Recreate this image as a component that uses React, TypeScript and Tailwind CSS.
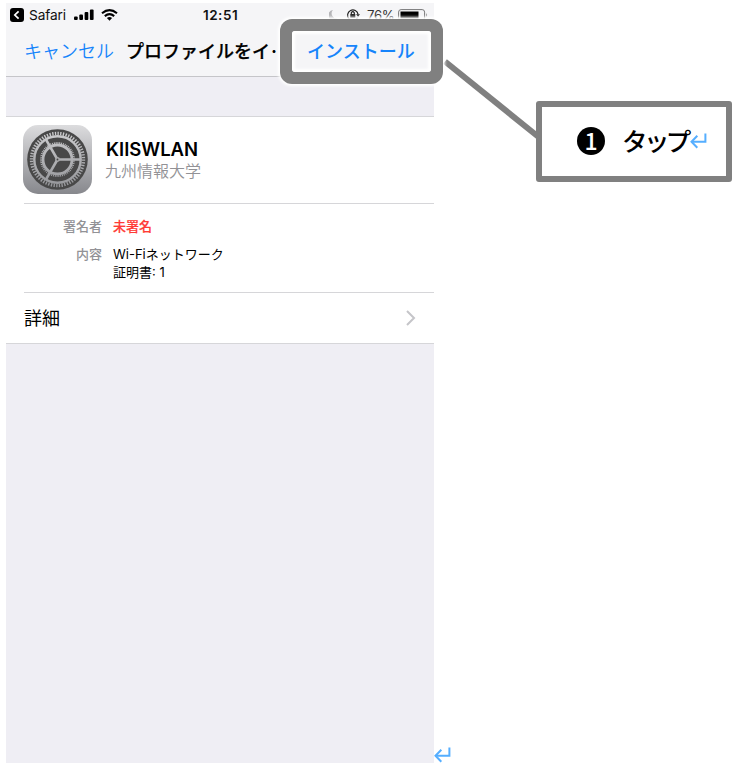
import React from "react";

const latin = "font-['Inter','Noto_Sans_CJK_JP',sans-serif]";

function ReturnMark({ className = "" }: { className?: string }) {
  return (
    <svg className={className} width="17" height="16" viewBox="0 0 17 16" fill="none" stroke="#55aeff" strokeWidth="2">
      <path d="M15.4 0.5V8.8H2" />
      <path d="M7.3 2.8L1.5 8.8L7.3 14.8" />
    </svg>
  );
}

function StatusBar() {
  return (
    <div className="flex h-6 items-center text-[13.7px] leading-6 text-[#111]">
      <svg className="ml-1 shrink-0" width="14" height="14" viewBox="0 0 14 14">
        <rect width="14" height="14" rx="3" fill="#000" />
        <path d="M8.6 3.3L4.8 7L8.6 10.7" fill="none" stroke="#fff" strokeWidth="1.7" />
      </svg>
      <span className="ml-[5px] w-[37px] whitespace-nowrap tracking-[-0.1px]">Safari</span>
      <svg className="ml-2 shrink-0" width="20" height="12" viewBox="0 0 20 12" fill="#000">
        <rect x="0" y="7.5" width="3.7" height="3.5" rx="1" />
        <rect x="5.3" y="5.5" width="3.7" height="5.5" rx="1" />
        <rect x="10.6" y="3" width="3.7" height="8" rx="1" />
        <rect x="15.9" y="0.5" width="3.7" height="10.5" rx="1" />
      </svg>
      <svg className="ml-[7px] shrink-0" width="17" height="12" viewBox="0 0 17 12" fill="none" stroke="#000" strokeWidth="2.1">
        <path d="M1 4.2Q8.5 -2 16 4.2" />
        <path d="M3.8 7.1Q8.5 3.2 13.2 7.1" />
        <path d="M5.9 9L8.5 11.8L11.1 9Q8.5 7 5.9 9Z" fill="#000" stroke="none" />
      </svg>
      <span className="ml-[85px] w-[38px] whitespace-nowrap font-semibold text-[13.5px] tracking-[0.5px]">12:51</span>
      <svg className="ml-[88px] shrink-0" width="9" height="12" viewBox="0 0 9 12" fill="#b4b4b7">
        <path d="M4 1A5.1 5.1 0 0 0 8.5 9.5A5.2 5.2 0 1 1 4 1Z" />
      </svg>
      <svg className="ml-2 shrink-0" width="14" height="14" viewBox="0 0 14 14" fill="none" stroke="#222" strokeWidth="1.2">
        <path d="M11.5 9.8A5.3 5.3 0 1 1 12.1 6.4" />
        <path d="M10 6.3H14L12.1 8.8Z" fill="#222" stroke="none" />
        <rect x="4.3" y="6" width="5" height="3.8" fill="#222" stroke="none" />
        <path d="M5.3 6V4.8Q6.8 2.6 8.3 4.8V6" />
      </svg>
      <span className="ml-[7px] w-[28px] whitespace-nowrap text-[13.2px] tracking-[-0.3px] text-[#333]">76%</span>
      <svg className="ml-[3px] shrink-0" width="30" height="12" viewBox="0 0 30 12">
        <rect x="0.6" y="0.6" width="26" height="10.5" rx="2.5" fill="none" stroke="#777" />
        <rect x="2.5" y="2.5" width="18" height="7" fill="#000" />
        <path d="M28.3 4V8Q30 6 28.3 4Z" fill="#777" />
      </svg>
    </div>
  );
}

function SettingsIcon() {
  return (
    <svg className="mt-2 ml-[17px] shrink-0" width="69" height="69" viewBox="0 0 69 69" fill="none">
      <defs>
        <linearGradient id="plate" x1="0" y1="0" x2="0" y2="1">
          <stop offset="0" stopColor="#dcdcde" />
          <stop offset="1" stopColor="#87888d" />
        </linearGradient>
        <linearGradient id="metal" gradientUnits="userSpaceOnUse" x1="0" y1="5" x2="0" y2="64">
          <stop offset="0" stopColor="#cfcfd1" />
          <stop offset="1" stopColor="#929397" />
        </linearGradient>
      </defs>
      <rect width="69" height="69" rx="15" fill="url(#plate)" />
      <circle cx="34.5" cy="34.5" r="30.3" fill="#484848" />
      <circle cx="34.5" cy="34.5" r="26" stroke="url(#metal)" strokeWidth="3.4" pathLength="120" strokeDasharray="1 1" />
      <circle cx="34.5" cy="34.5" r="23.2" stroke="url(#metal)" strokeWidth="2.4" />
      <circle cx="34.5" cy="34.5" r="16.6" stroke="url(#metal)" strokeWidth="1.8" pathLength="112" strokeDasharray="1 1" />
      <circle cx="34.5" cy="34.5" r="14.5" stroke="url(#metal)" strokeWidth="2.8" />
      <path d="M35 34.5H57.5M34.2 34L23 14.6M34.2 35L23 54.4" stroke="url(#metal)" strokeWidth="2.6" />
      <circle cx="34.5" cy="34.5" r="2.4" fill="#aaaaac" />
      <circle cx="34.5" cy="34.5" r="0.9" fill="#444" />
    </svg>
  );
}

export default function App() {
  return (
    <div className={"relative h-[776px] w-[752px] overflow-hidden bg-white pt-[3px] pl-1.5 text-black " + latin}>
      <div className="flex h-[760px] w-[428px] flex-col overflow-hidden bg-[#efeef4]">
        <header className="h-[74px] shrink-0 border-b border-[#c5c5c9] bg-[#f5f5f7]">
          <StatusBar />
          <div className="flex pt-[10px] text-[18px] leading-[30px] whitespace-nowrap">
            <span className="ml-[18px] w-[102px] font-[350] text-[#1684fb]">キャンセル</span>
            <span className="font-medium [-webkit-text-stroke:0.25px_#000]">プロファイルをイ</span>
            <span className="ml-px font-bold">·</span>
          </div>
        </header>
        <section className="mt-[39px] h-[228px] shrink-0 border-y border-[#d6d6d9] bg-white">
          <div className="flex h-[86px]">
            <SettingsIcon />
            <div className="ml-[14px] pt-[20px] whitespace-nowrap">
              <h1 className="text-[18.5px] leading-6 font-semibold">KIISWLAN</h1>
              <p className="-ml-px text-[16px] leading-[21px] font-[350] text-[#929296]">九州情報大学</p>
            </div>
          </div>
          <dl className="ml-[18px] grid h-[90px] grid-cols-[78px_1fr] content-start gap-x-[11px] border-y border-[#d6d6d9] pt-[13px] text-[13px] leading-[18px]">
            <dt className="text-right font-medium text-[#929296]">署名者</dt>
            <dd className="font-medium text-[#ff3b36] [-webkit-text-stroke:0.2px_#ff3b36]">未署名</dd>
            <dt className="mt-2.5 text-right font-medium text-[#929296]">内容</dt>
            <dd className="mt-2.5">Wi-Fiネットワーク<br />証明書: 1</dd>
          </dl>
          <div className="flex h-[50px] items-center justify-between pr-[18px] pl-[18px] text-[18px]">
            <span>詳細</span>
            <svg width="11" height="16" viewBox="0 0 11 16" fill="none" stroke="#c5c5c9" strokeWidth="2">
              <path d="M2 1L9 8L2 15" />
            </svg>
          </div>
        </section>
      </div>

      <svg className="absolute top-0 left-0" width="752" height="200" viewBox="0 0 752 200">
        <path d="M445 61.5L538 136.5" stroke="#808080" strokeWidth="6" />
      </svg>

      <div className="absolute top-[19px] left-[280px] flex h-[65px] w-[163px] rounded-xl bg-[#808080] p-3 shadow-[0_0_3px_2px_#fff]">
        <div className="flex-1 rounded-[3px] bg-[#f5f5f7] pl-[15px] text-[18px] leading-[41px] font-medium whitespace-nowrap text-[#1684fb] shadow-[inset_0_0_3px_3px_#fff]">
          インストール
        </div>
      </div>

      <div className="absolute top-[101px] left-[536px] flex h-[81px] w-[196px] items-start rounded-[3px] border-6 border-[#808080] bg-white">
        <div className="mt-5 ml-[35px] flex h-7 w-7 shrink-0 items-center justify-center rounded-full bg-black font-['Noto_Sans_CJK_JP',sans-serif] text-[23px] leading-7 font-medium text-white">
          <span className="-mt-0.5 leading-[34px]">1</span>
        </div>
        <span className="mt-[14px] ml-[17px] w-[68px] font-['Noto_Sans_CJK_JP',sans-serif] text-[25.5px] leading-[38px] font-medium tracking-[-3.6px] whitespace-nowrap">タップ</span>
        <ReturnMark className="mt-[26px] shrink-0" />
      </div>
      <ReturnMark className="absolute top-[747px] left-[434px]" />
    </div>
  );
}
